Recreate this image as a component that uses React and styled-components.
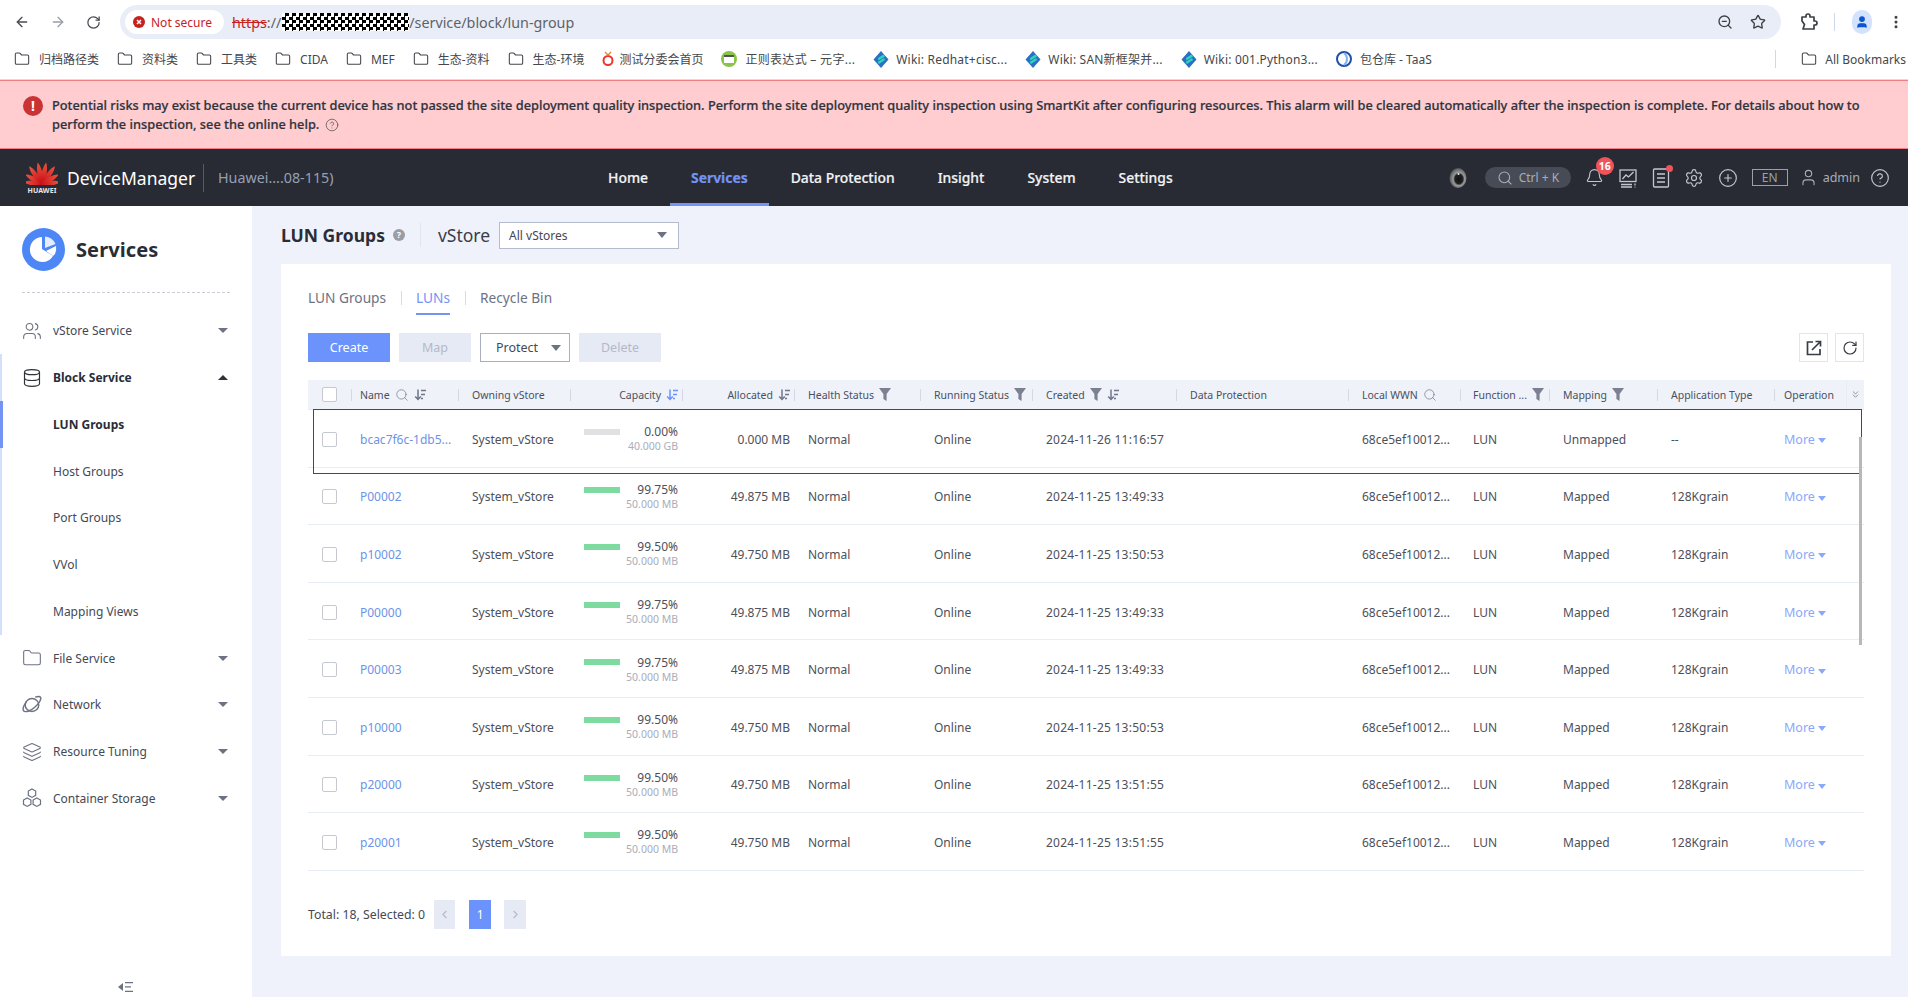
import React from 'react';
import styled, { createGlobalStyle } from 'styled-components';
import { ArrowLeft, ArrowRight, RotateCw, ZoomOut, Star, User, EllipsisVertical, Search, Bell, Settings, CirclePlus, CircleHelp, Users, Database, Folder, Layers, ChevronLeft, ChevronRight, ChevronsDown } from 'lucide-react';

const FONT = `"Noto Sans", "Noto Sans CJK SC", sans-serif`;
const COLUMNS = '44px 107px 112px 112px 112px 126px 112px 144px 172px 112px 89px 108px 117px 71px 18px';

const Global = createGlobalStyle`
  html, body { margin: 0; padding: 0; background: #fff; }
  body { font-family: ${FONT}; color: #4a4d57; }
  * { box-sizing: border-box; }
`;
const Page = styled.div`position: relative; height: 997px; width: 1908px; overflow: hidden; display: flex; flex-direction: column; background: #eff2fb;`;

/* browser chrome */
const Toolbar = styled.div`height: 39px; padding-top: 5px; background: #fff; display: flex; align-items: flex-start; flex: none;`;
const NavIcons = styled.div`width: 120px; height: 34px; padding-left: 14px; display: flex; align-items: center; gap: 20px; color: #474a4f;`;
const Omnibox = styled.div`width: 1661px; height: 34px; border-radius: 17px; background: #e9edf7; display: flex; align-items: center; padding: 0 15px 0 5px;`;
const SecurePill = styled.div`width: 99px; height: 24px; border-radius: 12px; background: #fff; display: flex; align-items: center; gap: 6px; padding-left: 8px; color: #c5221f; font-size: 12px;`;
const Url = styled.div`margin-left: 8px; display: flex; align-items: center; font-size: 14.3px; color: #5f6368; flex: 1;`;
const Struck = styled.span`color: #c5221f; text-decoration: line-through;`;
const Masked = styled.span`display: inline-block; width: 127px; height: 18px; margin-left: 1px; background: repeating-conic-gradient(#000 0 25%, #fff 0 50%) 0 0 / 7px 7px;`;
const OmniIcons = styled.div`display: flex; align-items: center; gap: 17px; color: #3c4043;`;
const ToolRight = styled.div`flex: 1; height: 34px; display: flex; align-items: center; padding-left: 18px; color: #3c4043;`;
const Divider = styled.span`width: 1px; height: 18px; background: #cfd8ea; margin: 0 17px 0 15px;`;
const Avatar = styled.span`width: 20px; height: 24px; border-radius: 12px; background: #d3e3fd; color: #0b57d0; display: flex; align-items: center; justify-content: center; margin-right: 16px;`;

const Bookmarks = styled.div`height: 41px; flex: none; background: #fff; border-bottom: 1px solid #dcdcdc; padding: 0 2px 0 14px; display: flex; align-items: center; gap: 18px; font-size: 12px; color: #44474c; white-space: nowrap;`;
const Mark = styled.div`display: flex; align-items: center; gap: ${p => p.$gap || 8}px; letter-spacing: ${p => p.$ls || 0}px;`;
const MarkEnd = styled(Mark)`margin-left: auto; padding-left: 25px; border-left: 1px solid #cfd8ea; height: 18px; gap: 8px;`;

/* banner */
const Banner = styled.div`height: 69px; flex: none; background: #ffcdd0; border-top: 1px solid #ee7f84; border-bottom: 1px solid #ee7f84; padding: 15px 30px 0 23px; display: flex; gap: 9px; font-size: 12.8px; line-height: 19px; color: #30333c; font-weight: 500;`;
const AlertDot = styled.div`flex: none; width: 20px; height: 20px; border-radius: 50%; background: #c93333; color: #fff; font-weight: 700; font-size: 14px; line-height: 20px; text-align: center;`;
const BannerText = styled.div`-webkit-text-stroke: 0.2px #30333c;`;
const HelpInline = styled.span`display: inline-flex; vertical-align: -3px; margin-left: 6px; color: #555;`;

/* header */
const Header = styled.div`height: 57px; flex: none; background: #282b33; display: flex; align-items: stretch; color: #fff;`;
const Brand = styled.div`width: 587px; padding-left: 26px; display: flex; align-items: center;`;
const LogoWrap = styled.div`width: 32px; display: flex; flex-direction: column; align-items: center; line-height: 1;`;
const LogoWord = styled.span`font-size: 7px; font-weight: 700; letter-spacing: 0.1px; color: #e8e8ea; margin-top: 2px;`;
const BrandName = styled.div`margin-left: 9px; font-size: 17.5px; width: 136px; white-space: nowrap;`;
const BrandDevice = styled.div`height: 28px; border-left: 1px solid #565a64; padding-left: 14px; line-height: 28px; font-size: 14.3px; color: #95a0b4; white-space: nowrap;`;
const Nav = styled.div`display: flex; gap: 1px;`;
const NavItem = styled.div`padding: 0 21px; display: flex; align-items: center; font-size: 13.9px; white-space: nowrap; font-weight: ${p => p.$active ? 700 : 500}; color: ${p => p.$active ? '#7394f5' : '#f2f3f5'}; border-bottom: 3px solid ${p => p.$active ? '#7394f5' : 'transparent'}; padding-top: 3px; -webkit-text-stroke: 0.2px currentColor;`;
const HeadTools = styled.div`margin-left: auto; padding-right: 18px; display: flex; align-items: center; gap: 14px; color: #c2c7d2;`;
const SearchPill = styled.div`width: 86px; height: 21px; border-radius: 11px; background: #474b55; display: flex; align-items: center; gap: 6px; padding-left: 12px; font-size: 12px; color: #a7adba; margin-left: 4px;`;
const BellWrap = styled.div`position: relative; display: flex;`;
const Badge = styled.span`position: absolute; top: -11px; right: -10px; width: 18px; height: 18px; border-radius: 50%; background: #f1535a; color: #fff; font-size: 10.5px; font-weight: 700; line-height: 18px; text-align: center;`;
const RedDot = styled.span`position: absolute; top: -3px; right: -3px; width: 7px; height: 7px; border-radius: 50%; background: #f1535a;`;
const LangBox = styled.div`width: 36px; height: 17px; border: 1px solid #9aa0ad; font-size: 12px; line-height: 15px; text-align: center; color: #9aa0ad; margin-right: -3px;`;
const UserBox = styled.div`display: flex; align-items: center; gap: 5px; font-size: 12.5px; color: #a7adba; margin-right: -4px;`;

/* body */
const Body = styled.div`flex: 1; display: flex; min-height: 0;`;
const Sidebar = styled.div`width: 252px; flex: none; background: #fff; display: flex; flex-direction: column;`;
const SideHead = styled.div`height: 87px; margin: 0 22px 14.5px; border-bottom: 1px dashed #c9ccd6; display: flex; align-items: center; gap: 11px; padding-top: 1px;`;
const SideTitle = styled.div`font-size: 20px; font-weight: 700; color: #2a2d36; letter-spacing: 0.1px;`;
const SideGroup = styled.div`box-shadow: inset 2px 0 0 #d3dffc;`;
const SideRow = styled.div`height: 46.75px; padding: 0 24px 0 22px; display: flex; align-items: center; font-size: 12px; color: ${p => p.$strong ? '#2a2d36' : '#444955'}; font-weight: ${p => p.$strong ? 700 : 400};`;
const SideIcon = styled.span`width: 31px; display: flex; color: ${p => p.$dark ? '#2f323c' : '#6d7283'};`;
const SideCaret = styled.span`margin-left: auto; width: 0; height: 0; border-left: 5px solid transparent; border-right: 5px solid transparent; ${p => p.$up ? 'border-bottom: 5px solid #2f323c;' : 'border-top: 5px solid #6d7283;'}`;
const SubRow = styled.div`height: 46.75px; padding-left: 53px; display: flex; align-items: center; font-size: 12px; color: ${p => p.$active ? '#2a2d36' : '#444955'}; font-weight: ${p => p.$active ? 700 : 400}; ${p => p.$active ? 'box-shadow: inset 3px 0 0 #7394f5;' : ''}`;
const Collapse = styled.div`margin-top: auto; height: 16px; display: flex; justify-content: center; color: #6d7283;`;

const Main = styled.div`flex: 1; min-width: 0; padding: 0 17px 0 29px; display: flex; flex-direction: column;`;
const TitleBar = styled.div`height: 58px; flex: none; display: flex; align-items: center;`;
const PageTitle = styled.div`font-size: 17.5px; font-weight: 700; color: #2a2d36;`;
const TitleHelp = styled.span`width: 12px; height: 12px; margin-left: 8px; border-radius: 50%; background: #9a9da6; color: #fff; font-size: 9px; font-weight: 700; line-height: 12px; text-align: center;`;
const TitleSep = styled.span`width: 1px; height: 24px; background: #e2e5ee; margin: 0 18px 0 15px;`;
const VStoreLabel = styled.span`font-size: 17.5px; color: #3a3d47; margin-right: 9px; margin-left: -1px;`;
const VSelect = styled.div`width: 180px; height: 27px; border: 1px solid #b4bbcb; background: #fff; padding: 0 11px 0 9px; display: flex; align-items: center; justify-content: space-between; font-size: 12px; color: #444955;`;
const Caret = styled.span`width: 0; height: 0; border-left: 5px solid transparent; border-right: 5px solid transparent; border-top: 6px solid #6d7283;`;
const MoreCaret = styled.span`width: 0; height: 0; margin-top: 3px; border-left: 4px solid transparent; border-right: 4px solid transparent; border-top: 5px solid #8ba8fb;`;

const Card = styled.div`background: #fff; height: 692px; padding: 20px 27px 0; display: flex; flex-direction: column;`;
const Tabs = styled.div`height: 31px; display: flex; flex: none; font-size: 13.7px; color: #6d7283;`;
const Tab = styled.div`height: 31px; padding-top: 4px; white-space: nowrap; color: ${p => p.$active ? '#7394f5' : '#6d7283'}; border-bottom: 2px solid ${p => p.$active ? '#7394f5' : 'transparent'};`;
const TabSep = styled.span`width: 1px; height: 14px; background: #d8dbe4; margin: 7px 14.5px 0;`;
const Actions = styled.div`margin-top: 18px; height: 29px; flex: none; display: flex; gap: 9px;`;
const Btn = styled.div`width: ${p => p.$w}px; height: 29px; display: flex; align-items: center; justify-content: center; font-size: 12.5px; background: ${p => p.$primary ? '#6c93fb' : '#e6eaf5'}; color: ${p => p.$primary ? '#fff' : '#b3b9c9'};`;
const OutlineBtn = styled(Btn)`background: #fff; border: 1px solid #a9afbf; color: #444955; justify-content: space-between; padding: 0 8px 0 15px;`;
const IconBtn = styled.div`width: 29px; height: 29px; border: 1px solid #e3e5eb; display: flex; align-items: center; justify-content: center; color: #3a3d47;`;
const ActionRight = styled.div`margin-left: auto; display: flex; gap: 7px;`;

const Table = styled.div`margin-top: 18px; flex: none; font-size: 12px; color: #4d5059;`;
const HeadRow = styled.div`display: grid; grid-template-columns: ${COLUMNS}; height: 30px; background: #eff2f9; border-bottom: 1px solid #e7ecf5;`;
const HeadCell = styled.div`display: flex; align-items: center; padding-left: ${p => p.$pl ?? 13}px; font-size: 10.5px; color: #4b5060; gap: 5px; white-space: nowrap; ${p => p.$right ? 'justify-content: flex-end;' : ''}`;
const HeadSep = styled.span`width: 1px; height: 12px; background: #d5d9e3; ${p => p.$right ? 'margin-left: -1px;' : 'margin-left: auto;'}`;
const Row = styled.div`display: grid; grid-template-columns: ${COLUMNS}; height: 57.6px; padding-top: 2px; border-bottom: 1px solid #e9edf5;`;
const Cell = styled.div`display: flex; align-items: center; padding-left: ${p => p.$pl ?? 13}px; padding-right: ${p => p.$pr ?? 0}px; white-space: nowrap; letter-spacing: ${p => p.$ls || 0}px; ${p => p.$right ? 'justify-content: flex-end;' : ''}`;
const CheckCell = styled.div`display: flex; align-items: center; padding-left: 14px;`;
const Check = styled.span`width: 15px; height: 15px; border: 1px solid #c6c9d1; border-radius: 2px; background: #fff;`;
const Link = styled.span`color: #6c93e8;`;
const CapCell = styled.div`display: flex; align-items: center; justify-content: space-between; padding: 0 5px 0 13px;`;
const Bar = styled.div`width: 36px; height: 6px; background: #e1e1e3; align-self: flex-start; margin-top: 17px;`;
const BarFill = styled.div`height: 100%; background: #7edb9f;`;
const CapText = styled.div`text-align: right; line-height: 14px;`;
const CapSub = styled.div`font-size: 10.5px; color: #a9aeba;`;
const More = styled.div`display: flex; align-items: center; gap: 3px; color: #8ba8fb; font-size: 12.5px;`;
const FoldCell = styled.div`display: flex; align-items: center; justify-content: center; border-left: 1px solid #e7ecf5; color: #6d7283;`;

const Pager = styled.div`margin-top: 29px; height: 29px; display: flex; align-items: center; font-size: 12.3px; color: #444955;`;
const PageBtn = styled.div`width: ${p => p.$w}px; height: 29px; margin-left: ${p => p.$ml}px; display: flex; align-items: center; justify-content: center; background: ${p => p.$on ? '#6c93fb' : '#e6eaf5'}; color: ${p => p.$on ? '#fff' : '#b3b9c9'}; font-size: 12px;`;

/* annotation and scrollbar lying over the table */
const RedBox = styled.div`position: absolute; left: 313px; top: 409px; width: 1549px; height: 65px; border: 1px solid #ee0010; pointer-events: none;`;
const ScrollThumb = styled.div`position: absolute; left: 1859px; top: 437px; width: 3px; height: 208px; background: #b8b8b8;`;

/* drawings */
const FolderMark = () => <Folder size={16} strokeWidth={1.6} color="#44474c" />;
const WikiMark = () => (
  <svg width="16" height="17" viewBox="0 0 16 17"><path d="M8 0l7.5 8.5L8 17 .5 8.5z" fill="#2a6fc4" /><path d="M5 7l5.5-3.5L12 5.5 5.5 9.5zM4.5 11L11 7l1 2L6 13z" fill="#2fd4bd" /></svg>
);
const PuzzleMark = () => (
  <svg width="20" height="20" viewBox="0 0 20 20" fill="none" stroke="currentColor" strokeWidth="1.7" strokeLinejoin="round"><path d="M3 5h4V4a2 2 0 0 1 4 0v1h4v4h1a2 2 0 0 1 0 4h-1v4H4l1.5-4.5L3 9z" /></svg>
);
const Huawei = () => (
  <svg width="32" height="24" viewBox="0 0 32 24">
    <defs><linearGradient id="hw" x1="0" y1="0" x2="0" y2="1"><stop offset="0" stopColor="#f0563e" /><stop offset="1" stopColor="#c40a18" /></linearGradient></defs>
    {[-84, -60, -36, -11, 11, 36, 60, 84].map(a => (
      <path key={a} d="M16 23C12.6 17 12.8 7 16 1c3.2 6 3.4 16 0 22z" fill="url(#hw)" transform={`rotate(${a} 16 23) ${Math.abs(a) > 50 ? 'translate(0 3)' : ''}`} />
    ))}
  </svg>
);
const EyeMark = () => (
  <svg width="18" height="22" viewBox="0 0 18 22">
    <defs><radialGradient id="eye" cx=".55" cy=".55" r=".6"><stop offset="0" stopColor="#111" /><stop offset=".4" stopColor="#222" /><stop offset=".55" stopColor="#9a9a9a" /><stop offset="1" stopColor="#44464c" /></radialGradient></defs>
    <ellipse cx="9" cy="11" rx="8.5" ry="10" fill="url(#eye)" />
    <circle cx="9.5" cy="7" r="1" fill="#eee" />
  </svg>
);
const ChartMark = () => (
  <svg width="20" height="20" viewBox="0 0 20 20" fill="none" stroke="currentColor" strokeWidth="1.3"><rect x="2" y="2" width="16" height="11.5" /><path d="M4.5 11l3.5-4 2.5 2 5-5" /><path d="M3 16.5h11M3 19h11M17 15.5v2M17 18.7v.8" /></svg>
);
const NoteMark = () => (
  <svg width="18" height="20" viewBox="0 0 18 20" fill="none" stroke="currentColor" strokeWidth="1.3"><rect x="1.5" y="1" width="15" height="18" rx="1" /><path d="M5 6h8M5 10h8M5 14h8" /></svg>
);
const ExportMark = () => (
  <svg width="16" height="16" viewBox="0 0 16 16" fill="none" stroke="currentColor" strokeWidth="1.7"><path d="M7 2H1.5v12.5H14V9" /><path d="M6 10l8-8M9.5 1.5h5v5" /></svg>
);
const PieMark = () => (
  <svg width="43" height="43" viewBox="0 0 43 43">
    <circle cx="21.5" cy="21.5" r="21.5" fill="#4d86f5" />
    <path d="M20 9a12.5 12.5 0 1 0 11 19l-11-7z" fill="#fff" />
    <path d="M23 8.5a12.5 12.5 0 0 1 10.5 7.5L23 20z" fill="#fff" opacity=".85" />
    <path d="M24 23l10-5a13 13 0 0 1-1 8l-2 2z" fill="#fff" />
  </svg>
);
const PlanetMark = () => (
  <svg width="20" height="20" viewBox="0 0 20 20" fill="none" stroke="currentColor" strokeWidth="1.4"><ellipse cx="10" cy="10" rx="6.8" ry="6.5" /><path d="M4.6 6.5C2 10 .6 14 1.5 15.8c1.6 2 7 .2 11-3.3 4.3-3.6 7-8 6.2-10-.6-1.2-3-1.2-5.5-.3" /></svg>
);
const HexMark = () => (
  <svg width="20" height="20" viewBox="0 0 20 20" fill="none" stroke="currentColor" strokeWidth="1.2"><path d="M10 1l3.7 2.1v4.2L10 9.4 6.3 7.3V3.1zM5.2 10l3.7 2.1v4.2L5.2 18.4 1.5 16.3v-4.2zM14.8 10l3.7 2.1v4.2l-3.7 2.1-3.7-2.1v-4.2z" /></svg>
);
const CollapseMark = () => (
  <svg width="16" height="12" viewBox="0 0 16 12" fill="currentColor"><path d="M5 2v8L0 6z" /><path d="M7 1h8v1.3H7zM7 5.3h6v1.3H7zM7 9.7h8V11H7z" /></svg>
);
const Funnel = () => (
  <svg width="12" height="13" viewBox="0 0 12 13" fill="#7c8192"><path d="M0 0h12L7.6 6v7L4.4 11V6z" /></svg>
);
const Sort = ({ c = '#70768a' }) => (
  <svg width="12" height="12" viewBox="0 0 12 12" fill="none" stroke={c} strokeWidth="1.5"><path d="M4 .5v10M1.2 7.5 4 10.5l2.8-3" /><path d="M7 1.5h5M7 5.5h4M7 9.5h2" /></svg>
);
const Loupe = () => <Search size={14} strokeWidth={1.2} color="#70768a" />;

const rows = [
  ['bcac7f6c-1db5...', 0, '40.000 GB', '0.000 MB', '2024-11-26 11:16:57', 'Unmapped', '--'],
  ['P00002', 99.75, '50.000 MB', '49.875 MB', '2024-11-25 13:49:33', 'Mapped', '128Kgrain'],
  ['p10002', 99.5, '50.000 MB', '49.750 MB', '2024-11-25 13:50:53', 'Mapped', '128Kgrain'],
  ['P00000', 99.75, '50.000 MB', '49.875 MB', '2024-11-25 13:49:33', 'Mapped', '128Kgrain'],
  ['P00003', 99.75, '50.000 MB', '49.875 MB', '2024-11-25 13:49:33', 'Mapped', '128Kgrain'],
  ['p10000', 99.5, '50.000 MB', '49.750 MB', '2024-11-25 13:50:53', 'Mapped', '128Kgrain'],
  ['p20000', 99.5, '50.000 MB', '49.750 MB', '2024-11-25 13:51:55', 'Mapped', '128Kgrain'],
  ['p20001', 99.5, '50.000 MB', '49.750 MB', '2024-11-25 13:51:55', 'Mapped', '128Kgrain'],
];

export default function App() {
  return (
    <Page>
      <Global />
      <Toolbar>
        <NavIcons>
          <ArrowLeft size={16} strokeWidth={2} />
          <ArrowRight size={16} strokeWidth={2} color="#9aa0a6" />
          <RotateCw size={15} strokeWidth={2} />
        </NavIcons>
        <Omnibox>
          <SecurePill>
            <svg width="12" height="12" viewBox="0 0 12 12"><circle cx="6" cy="6" r="6" fill="#c5221f" /><path d="M4 4l4 4M8 4l-4 4" stroke="#fff" strokeWidth="1.5" /></svg>
            Not secure
          </SecurePill>
          <Url><Struck>https</Struck>://<Masked />/service/block/lun-group</Url>
          <OmniIcons>
            <ZoomOut size={16} strokeWidth={2} />
            <Star size={16} strokeWidth={2} />
          </OmniIcons>
        </Omnibox>
        <ToolRight>
          <PuzzleMark />
          <Divider />
          <Avatar><User size={14} fill="#0b57d0" /></Avatar>
          <EllipsisVertical size={16} strokeWidth={2.5} />
        </ToolRight>
      </Toolbar>
      <Bookmarks>
        {['归档路径类', '资料类', '工具类', 'CIDA', 'MEF', '生态-资料', '生态-环境'].map(t => <Mark key={t} $gap={9}><FolderMark />{t}</Mark>)}
        <Mark $gap={5}>
          <svg width="12" height="16" viewBox="0 0 12 16"><circle cx="6" cy="9.5" r="4.5" fill="none" stroke="#e33" strokeWidth="2" /><path d="M3 1l3 3 3-3" fill="none" stroke="#e8872d" strokeWidth="1.4" /></svg>
          测试分委会首页
        </Mark>
        <Mark $ls={0.3}>
          <svg width="16" height="16" viewBox="0 0 16 16"><circle cx="8" cy="8" r="8" fill="#8bc34a" /><rect x="3" y="4" width="10" height="8" fill="#fff" /><rect x="3" y="4" width="10" height="2" fill="#555" /></svg>
          正则表达式 – 元字...
        </Mark>
        <Mark $gap={7} $ls={0.2}><WikiMark />Wiki: Redhat+cisc...</Mark>
        <Mark $gap={7} $ls={0.2}><WikiMark />Wiki: SAN新框架并...</Mark>
        <Mark $gap={7} $ls={0.2}><WikiMark />Wiki: 001.Python3...</Mark>
        <Mark>
          <svg width="16" height="16" viewBox="0 0 16 16"><circle cx="8" cy="8" r="7" fill="none" stroke="#1f4fa8" strokeWidth="2" /><path d="M8 2c4 3 4 9 0 12" fill="none" stroke="#7fb4e8" strokeWidth="2" /></svg>
          包仓库 - TaaS
        </Mark>
        <MarkEnd><FolderMark />All Bookmarks</MarkEnd>
      </Bookmarks>
      <Banner>
        <AlertDot>!</AlertDot>
        <BannerText>
          Potential risks may exist because the current device has not passed the site deployment quality inspection. Perform the site deployment quality inspection using SmartKit after configuring resources. This alarm will be cleared automatically after the inspection is complete. For details about how to perform the inspection, see the online help.
          <HelpInline><CircleHelp size={14} strokeWidth={1.3} /></HelpInline>
        </BannerText>
      </Banner>
      <Header>
        <Brand>
          <LogoWrap><Huawei /><LogoWord>HUAWEI</LogoWord></LogoWrap>
          <BrandName>DeviceManager</BrandName>
          <BrandDevice>Huawei....08-115)</BrandDevice>
        </Brand>
        <Nav>
          <NavItem>Home</NavItem>
          <NavItem $active>Services</NavItem>
          <NavItem>Data Protection</NavItem>
          <NavItem>Insight</NavItem>
          <NavItem>System</NavItem>
          <NavItem>Settings</NavItem>
        </Nav>
        <HeadTools>
          <EyeMark />
          <SearchPill><Search size={16} strokeWidth={1.6} />Ctrl + K</SearchPill>
          <BellWrap><Bell size={19} strokeWidth={1.4} /><Badge>16</Badge></BellWrap>
          <ChartMark />
          <BellWrap><NoteMark /><RedDot /></BellWrap>
          <Settings size={20} strokeWidth={1.4} />
          <CirclePlus size={20} strokeWidth={1.4} />
          <LangBox>EN</LangBox>
          <UserBox><User size={19} strokeWidth={1.4} />admin</UserBox>
          <CircleHelp size={20} strokeWidth={1.4} />
        </HeadTools>
      </Header>
      <Body>
        <Sidebar>
          <SideHead><PieMark /><SideTitle>Services</SideTitle></SideHead>
          <SideRow><SideIcon><Users size={20} strokeWidth={1.3} /></SideIcon>vStore Service<SideCaret /></SideRow>
          <SideGroup>
            <SideRow $strong><SideIcon $dark><Database size={20} strokeWidth={1.4} /></SideIcon>Block Service<SideCaret $up /></SideRow>
            <SubRow $active>LUN Groups</SubRow>
            <SubRow>Host Groups</SubRow>
            <SubRow>Port Groups</SubRow>
            <SubRow>VVol</SubRow>
            <SubRow>Mapping Views</SubRow>
          </SideGroup>
          <SideRow><SideIcon><Folder size={20} strokeWidth={1.3} /></SideIcon>File Service<SideCaret /></SideRow>
          <SideRow><SideIcon><PlanetMark /></SideIcon>Network<SideCaret /></SideRow>
          <SideRow><SideIcon><Layers size={20} strokeWidth={1.3} /></SideIcon>Resource Tuning<SideCaret /></SideRow>
          <SideRow><SideIcon><HexMark /></SideIcon>Container Storage<SideCaret /></SideRow>
          <Collapse><CollapseMark /></Collapse>
        </Sidebar>
        <Main>
          <TitleBar>
            <PageTitle>LUN Groups</PageTitle>
            <TitleHelp>?</TitleHelp>
            <TitleSep />
            <VStoreLabel>vStore</VStoreLabel>
            <VSelect>All vStores<Caret /></VSelect>
          </TitleBar>
          <Card>
            <Tabs>
              <Tab>LUN Groups</Tab><TabSep />
              <Tab $active>LUNs</Tab><TabSep />
              <Tab>Recycle Bin</Tab>
            </Tabs>
            <Actions>
              <Btn $w={82} $primary>Create</Btn>
              <Btn $w={72}>Map</Btn>
              <OutlineBtn $w={90}>Protect<Caret /></OutlineBtn>
              <Btn $w={82}>Delete</Btn>
              <ActionRight>
                <IconBtn><ExportMark /></IconBtn>
                <IconBtn><RotateCw size={16} strokeWidth={1.8} /></IconBtn>
              </ActionRight>
            </Actions>
            <Table>
              <HeadRow>
                <CheckCell><Check /><HeadSep /></CheckCell>
                <HeadCell $pl={8}>Name<Loupe /><Sort /><HeadSep /></HeadCell>
                <HeadCell>Owning vStore<HeadSep /></HeadCell>
                <HeadCell $right>Capacity<Sort c="#6c93fb" /><HeadSep $right /></HeadCell>
                <HeadCell $right>Allocated<Sort /><HeadSep $right /></HeadCell>
                <HeadCell>Health Status<Funnel /><HeadSep /></HeadCell>
                <HeadCell>Running Status<Funnel /><HeadSep /></HeadCell>
                <HeadCell>Created<Funnel /><Sort /><HeadSep /></HeadCell>
                <HeadCell>Data Protection<HeadSep /></HeadCell>
                <HeadCell>Local WWN<Loupe /><HeadSep /></HeadCell>
                <HeadCell $pl={12}>Function ...<Funnel /><HeadSep /></HeadCell>
                <HeadCell>Mapping<Funnel /><HeadSep /></HeadCell>
                <HeadCell>Application Type<HeadSep /></HeadCell>
                <HeadCell $pl={9}>Operation</HeadCell>
                <FoldCell><ChevronsDown size={11} strokeWidth={1.6} /></FoldCell>
              </HeadRow>
              {rows.map(([name, pct, cap, alloc, created, mapping, app]) => (
                <Row key={name}>
                  <CheckCell><Check /></CheckCell>
                  <Cell $pl={8}><Link>{name}</Link></Cell>
                  <Cell>System_vStore</Cell>
                  <CapCell>
                    <Bar><BarFill style={{ width: `${pct}%` }} /></Bar>
                    <CapText>{pct.toFixed(2)}%<CapSub>{cap}</CapSub></CapText>
                  </CapCell>
                  <Cell $right $pr={5}>{alloc}</Cell>
                  <Cell>Normal</Cell>
                  <Cell>Online</Cell>
                  <Cell $ls={0.25}>{created}</Cell>
                  <Cell />
                  <Cell>68ce5ef10012...</Cell>
                  <Cell $pl={12}>LUN</Cell>
                  <Cell>{mapping}</Cell>
                  <Cell>{app}</Cell>
                  <Cell $pl={9}><More>More<MoreCaret /></More></Cell>
                  <Cell $pl={0} />
                </Row>
              ))}
            </Table>
            <Pager>
              Total: 18, Selected: 0
              <PageBtn $w={21} $ml={9}><ChevronLeft size={13} /></PageBtn>
              <PageBtn $w={22} $ml={14} $on>1</PageBtn>
              <PageBtn $w={22} $ml={13}><ChevronRight size={13} /></PageBtn>
            </Pager>
          </Card>
        </Main>
      </Body>
      <RedBox />
      <ScrollThumb />
    </Page>
  );
}
